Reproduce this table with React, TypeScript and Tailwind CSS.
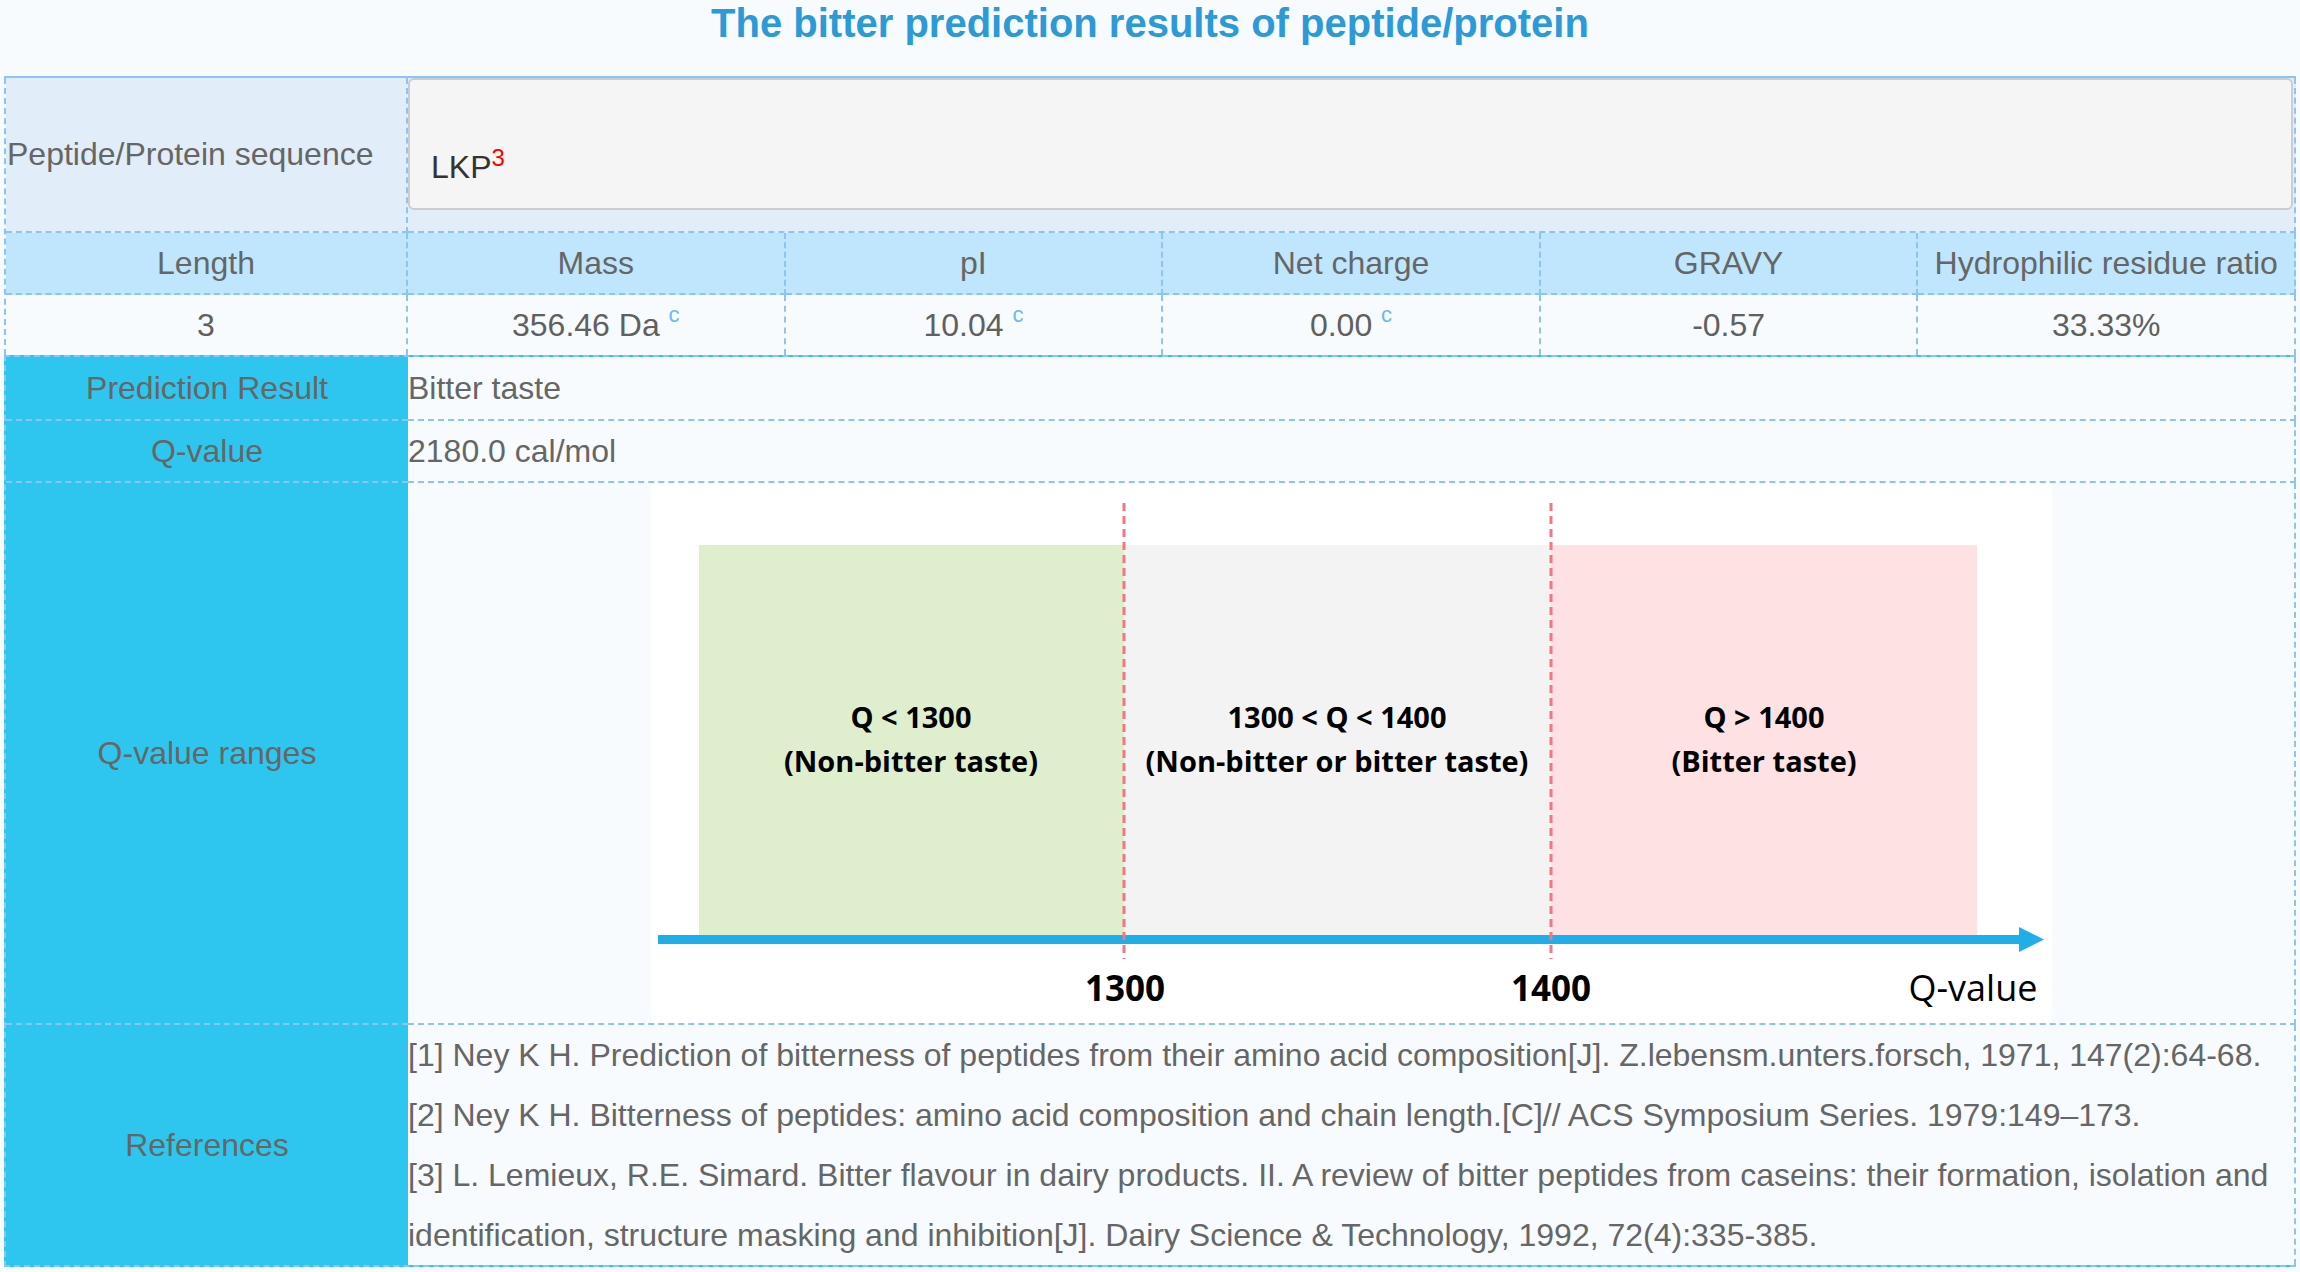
import React from "react";

const cell = "border-r-2 border-b-2 border-dashed border-[#8dc4f6]";

const headers = ["Length", "Mass", "pI", "Net charge", "GRAVY", "Hydrophilic residue ratio"];

const values: { v: string; sup?: boolean }[] = [
  { v: "3" },
  { v: "356.46 Da", sup: true },
  { v: "10.04", sup: true },
  { v: "0.00", sup: true },
  { v: "-0.57" },
  { v: "33.33%" },
];

const references = [
  "[1] Ney K H. Prediction of bitterness of peptides from their amino acid composition[J]. Z.lebensm.unters.forsch, 1971, 147(2):64-68.",
  "[2] Ney K H. Bitterness of peptides: amino acid composition and chain length.[C]// ACS Symposium Series. 1979:149–173.",
  "[3] L. Lemieux, R.E. Simard. Bitter flavour in dairy products. II. A review of bitter peptides from caseins: their formation, isolation and identification, structure masking and inhibition[J]. Dairy Science & Technology, 1992, 72(4):335-385.",
];

const QChart = () => {
  const labelFont = { fontFamily: "'Open Sans', 'Liberation Sans', sans-serif" };
  return (
    <svg width="1401" height="540" viewBox="0 0 1401 540" className="block bg-white">
      <rect x="48" y="62" width="425" height="392" fill="#dfefcd" />
      <rect x="473" y="62" width="427" height="392" fill="#f3f3f3" />
      <rect x="900" y="62" width="426" height="392" fill="#fde1e3" />
      <rect x="7" y="452" width="1362" height="9" fill="#20aeea" />
      <polygon points="1368,444 1393,456.5 1368,469" fill="#20aeea" />
      <line x1="473" y1="20" x2="473" y2="476" stroke="#f2777f" strokeWidth="3" strokeDasharray="8 5" />
      <line x1="900" y1="20" x2="900" y2="476" stroke="#f2777f" strokeWidth="3" strokeDasharray="8 5" />

      <g style={labelFont} fontWeight="700" fontSize="29" fill="#000" textAnchor="middle">
        <text x="260" y="245">Q &lt; 1300</text>
        <text x="260" y="289">(Non-bitter taste)</text>
        <text x="686" y="245">1300 &lt; Q &lt; 1400</text>
        <text x="686" y="289">(Non-bitter or bitter taste)</text>
        <text x="1113" y="245">Q &gt; 1400</text>
        <text x="1113" y="289">(Bitter taste)</text>
      </g>
      <g style={labelFont} fontWeight="700" fontSize="35" fill="#000" textAnchor="middle">
        <text x="474" y="518">1300</text>
        <text x="900" y="518">1400</text>
      </g>
      <text x="1322" y="518" style={labelFont} fontSize="36" fill="#000" textAnchor="middle">
        Q-value
      </text>
    </svg>
  );
};

export default function App() {
  return (
    <div className="min-h-screen bg-[#f7fbfd] px-[4px] font-['Liberation_Sans',Arial,sans-serif] text-[32px] text-[#666]">
      <h1 className="h-[76px] text-center text-[40px] leading-[46px] font-bold text-[#2c9ad6]">
        The bitter prediction results of peptide/protein
      </h1>

      {/* upper table: sequence + properties */}
      <div className="border-t-2 border-[#8cc4f5]">
        <div className="grid grid-cols-[402px_repeat(5,minmax(0,1fr))] border-l-2 border-dashed border-[#8dc4f6]">
          <div className={`${cell} h-[155px] bg-[#e1edf8] flex items-center pl-[1px] pb-[2px]`}>
            Peptide/Protein sequence
          </div>
          <div className={`${cell} col-span-5 h-[155px] bg-[#e1edf8]`}>
            <div className="mr-[1px] h-[132px] rounded-[6px] border-2 border-[#cdcdcd] bg-[#f5f5f5] pl-[21px] pt-[69px] leading-[36px] text-[#333]">
              LKP<sup className="text-[24px] text-[#ff0000]">3</sup>
            </div>
          </div>

          {headers.map((h) => (
            <div key={h} className={`${cell} h-[62px] bg-[#bfe6fc] flex items-center justify-center`}>
              {h}
            </div>
          ))}

          {values.map((item, i) => (
            <div
              key={i}
              className="h-[60px] border-r-2 border-dashed border-[#8dc4f6] flex items-center justify-center text-[#606060]"
            >
              <span>
                {item.v}
                {item.sup && (
                  <>
                    {" "}
                    <sup className="text-[22px] -top-[14px] text-[#6db5f7]">c</sup>
                  </>
                )}
              </span>
            </div>
          ))}
        </div>
      </div>

      {/* lower table: prediction */}
      <div className="grid grid-cols-[402px_minmax(0,1fr)] border-2 border-r-0 border-dashed border-[#8dc4f6] bg-[#2ec6ee]">
        <div className="h-[64px] border-b-2 border-dashed border-[#8dc4f6] bg-[#2ec6ee] flex items-center justify-center">
          Prediction Result
        </div>
        <div className={`${cell} h-[64px] bg-[#f7fbfd] flex items-center`}>Bitter taste</div>

        <div className="h-[62px] border-b-2 border-dashed border-[#8dc4f6] bg-[#2ec6ee] flex items-center justify-center">
          Q-value
        </div>
        <div className={`${cell} h-[62px] bg-[#f7fbfd] flex items-center`}>2180.0 cal/mol</div>

        <div className="h-[542px] border-b-2 border-dashed border-[#8dc4f6] bg-[#2ec6ee] flex items-center justify-center">
          Q-value ranges
        </div>
        <div className={`${cell} h-[542px] bg-[#f7fbfd] flex justify-center`}>
          <QChart />
        </div>

        <div className="h-[240px] bg-[#2ec6ee] flex items-center justify-center">References</div>
        <div className="h-[240px] border-r-2 border-dashed border-[#8dc4f6] bg-[#f7fbfd] leading-[60px]">
          {references.map((r) => (
            <div key={r}>{r}</div>
          ))}
        </div>
      </div>
    </div>
  );
}
